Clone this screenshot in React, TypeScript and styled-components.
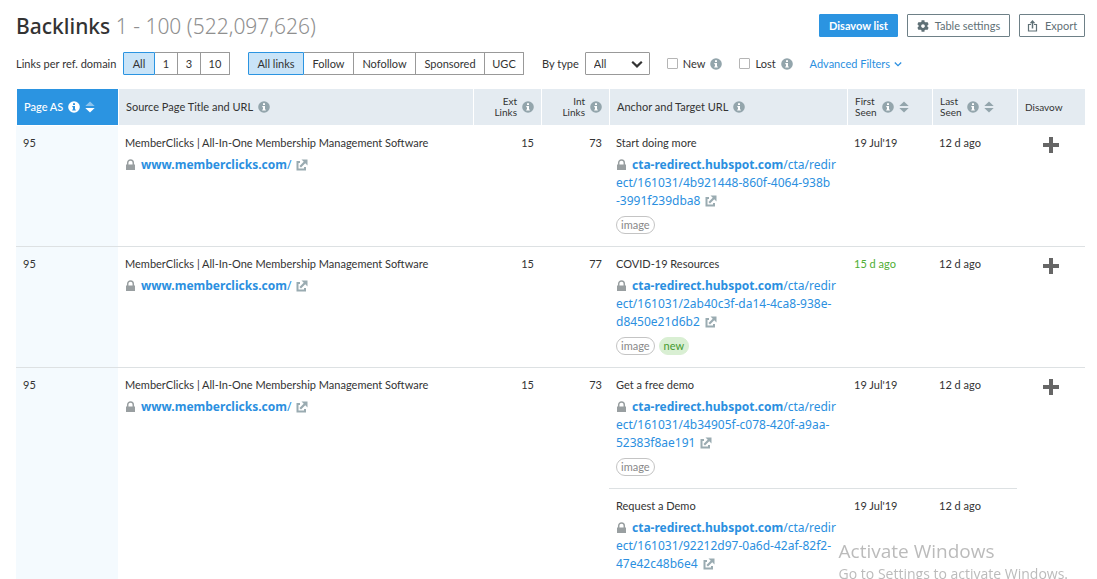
import React from 'react';
import styled, { createGlobalStyle, css } from 'styled-components';
import { FaCog } from 'react-icons/fa';

const GlobalStyle = createGlobalStyle`
  *, *::before, *::after { box-sizing: border-box; }
  html { scrollbar-width: none; }
  body {
    margin: 0;
    background: #fff;
    color: #333;
    font-family: Lato, "Noto Sans", sans-serif;
    font-size: 11px;
    line-height: 18px;
  }
  button, input, select { font: inherit; color: inherit; }
`;

const Page = styled.main`
  padding: 14px 12px 0 16px;
`;

const TitleBar = styled.header`
  display: flex;
  align-items: flex-start;
  justify-content: space-between;
`;

const Title = styled.h1`
  margin: 0;
  font-family: "Noto Sans", sans-serif;
  font-size: 21px;
  line-height: 24px;
  font-weight: 500;
`;

const Count = styled.span`
  font-weight: 300;
  color: #8f8f8f;
`;

const Actions = styled.div`
  display: flex;
  gap: 9px;
`;

const ActionButton = styled.button<{ $primary?: boolean; $width: number }>`
  display: flex;
  align-items: center;
  justify-content: center;
  gap: 6px;
  width: ${(p) => p.$width}px;
  height: 23px;
  padding: 0;
  white-space: nowrap;
  border: 1px solid #6e8087;
  border-radius: 1px;
  background: #fff;
  color: #5f7076;
  ${(p) =>
    p.$primary &&
    css`
      border-color: #2b94e1;
      background: #2b94e1;
      color: #fff;
      font-weight: 700;
    `}
`;

const Filters = styled.div`
  display: flex;
  align-items: center;
  height: 23px;
  margin-top: 14px;
  white-space: nowrap;
`;

const FilterLabel = styled.span`
  width: 107px;
`;

const Segments = styled.div`
  display: flex;
  margin-right: 18px;
`;

const Segment = styled.button<{ $width: number; $active?: boolean }>`
  width: ${(p) => p.$width}px;
  height: 23px;
  padding: 0;
  line-height: 21px;
  border: 1px solid #999;
  border-left-width: 0;
  background: #fff;
  color: #333;
  &:last-child { border-radius: 0 1px 1px 0; }
  ${(p) =>
    p.$active &&
    css`
      border: 1px solid #2b94e1;
      background: #c9e4f8;
      border-radius: 1px 0 0 1px;
    `}
`;

const SelectLabel = styled.label`
  display: flex;
  align-items: center;
  gap: 6px;
  margin-right: 17px;
`;

const SelectBox = styled.span`
  display: grid;
  align-items: center;
  width: 65px;
  > * { grid-area: 1 / 1; }
  > svg { justify-self: end; margin-right: 7px; pointer-events: none; }
`;

const Select = styled.select`
  appearance: none;
  width: 100%;
  height: 23px;
  padding: 0 8px;
  border: 1px solid #999;
  border-radius: 1px;
  background: #fff;
`;

const CheckGroup = styled.div`
  display: flex;
  align-items: center;
  gap: 5px;
  margin-right: 17px;
`;

const CheckLabel = styled.label`
  display: flex;
  align-items: center;
  gap: 5px;
`;

const Checkbox = styled.input`
  appearance: none;
  width: 11px;
  height: 11px;
  margin: 0;
  border: 1px solid #b5b5b5;
  border-radius: 1px;
  background: #fff;
`;

const AdvancedLink = styled.a`
  display: flex;
  align-items: center;
  gap: 4px;
  color: #2b8fe0;
  text-decoration: none;
`;

const Table = styled.table`
  width: 100%;
  margin-top: 14px;
  table-layout: fixed;
  border-collapse: separate;
  border-spacing: 0;
`;

const HeadCell = styled.th<{ $active?: boolean }>`
  height: 37px;
  padding: 0 7px;
  text-align: left;
  font-weight: 400;
  white-space: nowrap;
  background: #e4ebf1;
  border-left: 1px solid #fff;
  border-bottom: 1px solid #fff;
  ${(p) =>
    p.$active &&
    css`
      background: #2b94e1;
      color: #fff;
      font-weight: 500;
    `}
`;

const HeadContent = styled.div<{ $end?: boolean }>`
  display: flex;
  align-items: center;
  justify-content: ${(p) => (p.$end ? 'flex-end' : 'flex-start')};
  gap: 5px;
`;

const Stacked = styled.span<{ $end?: boolean }>`
  font-size: 10px;
  line-height: 11px;
  text-align: ${(p) => (p.$end ? 'right' : 'left')};
`;

const Small = styled.span`
  font-size: 10px;
`;

const Cell = styled.td<{ $tint?: boolean; $num?: boolean; $fresh?: boolean }>`
  height: 121px;
  padding: 8px 7px 11px;
  vertical-align: top;
  white-space: nowrap;
  border-bottom: 1px solid #dde1e3;
  text-align: ${(p) => (p.$num ? 'right' : 'left')};
  color: ${(p) => (p.$fresh ? '#4fae33' : '#333')};
  background: ${(p) => (p.$tint ? '#f4fafe' : 'transparent')};
`;

const PlusCell = styled(Cell)`
  padding: 10px 25px;
`;

const PlusButton = styled.button`
  display: block;
  padding: 0;
  border: 0;
  background: none;
  color: #666;
  line-height: 0;
`;

const UrlBlock = styled.div`
  margin-top: 4px;
  font-family: "Noto Sans", sans-serif;
  font-size: 12px;
  line-height: 18px;
  white-space: pre-line;
  > svg { vertical-align: -2px; }
`;

const Url = styled.a`
  margin: 0 5px;
  color: #2b8fe0;
  text-decoration: none;
`;

const Domain = styled.strong`
  font-weight: 700;
`;

const Tags = styled.div`
  display: flex;
  gap: 4px;
  margin-top: 6px;
`;

const Tag = styled.span<{ $fresh?: boolean }>`
  height: 18px;
  padding: 0 4px;
  line-height: 16px;
  border: 1px solid ${(p) => (p.$fresh ? '#d9efd3' : '#c4c4c4')};
  border-radius: 9px;
  background: ${(p) => (p.$fresh ? '#d9efd3' : '#fff')};
  color: ${(p) => (p.$fresh ? '#459a30' : '#888')};
`;

const Watermark = styled.div`
  position: fixed;
  right: 29px;
  bottom: -5px;
  color: rgba(120, 120, 120, 0.5);
  font-family: "Open Sans", sans-serif;
  font-size: 14px;
  line-height: 20px;
  white-space: nowrap;
  pointer-events: none;
`;

const WatermarkTitle = styled.div`
  font-size: 19px;
  line-height: 26px;
`;

const InfoIcon = ({ light }: { light?: boolean }) => (
  <svg width="12" height="12" viewBox="0 0 12 12" aria-hidden="true">
    <circle cx="6" cy="6" r="5.8" fill={light ? '#fff' : '#93a5ac'} />
    <path
      d="M5 2.3h2v1.7H5zM4.3 5H7v3.4h.8v1.2H4.2V8.400H5V6.200h-.7z"
      fill={light ? '#2b94e1' : '#fff'}
    />
  </svg>
);

const SortIcon = ({ light }: { light?: boolean }) => (
  <svg width="10" height="12" viewBox="0 0 10 12" aria-hidden="true">
    <path d="M5 .5 9.700 5H.3z" fill={light ? '#8cc4ee' : '#93a5ac'} />
    <path d="M5 11.500 9.700 7H.3z" fill={light ? '#fff' : '#93a5ac'} />
  </svg>
);

const LockIcon = () => (
  <svg width="11" height="12" viewBox="0 0 11 12" aria-hidden="true">
    <path d="M2.700 6V3.700a2.800 2.800 0 0 1 5.600 0V6" fill="none" stroke="#999fa1" strokeWidth="1.500" />
    <rect x="1" y="5.500" width="9" height="5.500" fill="#999fa1" />
  </svg>
);

const ExternalIcon = () => (
  <svg width="12" height="12" viewBox="0 0 12 12" aria-hidden="true">
    <path d="M4 3H1.500v7.500H9V8" fill="none" stroke="#9aabb1" strokeWidth="2" />
    <path d="M4.200 7.800 9 3" fill="none" stroke="#9aabb1" strokeWidth="2.200" />
    <path d="M5.500 .5h6v6z" fill="#9aabb1" />
  </svg>
);

const PlusIcon = () => (
  <svg width="18" height="18" viewBox="0 0 18 18" aria-hidden="true">
    <path d="M7 1h4v6h6v4h-6v6H7v-6H1V7h6z" fill="currentColor" />
  </svg>
);

const ExportIcon = () => (
  <svg width="12" height="12" viewBox="0 0 12 12" aria-hidden="true">
    <path d="M4 4.500H1.500v6.500h8V4.500H7" fill="none" stroke="currentColor" strokeWidth="1.200" />
    <path d="M5.500 8.500V2" fill="none" stroke="currentColor" strokeWidth="1.500" />
    <path d="M5.500 0 8.300 3.200H2.700z" fill="currentColor" />
  </svg>
);

const Chevron = ({ size, weight }: { size: number; weight: number }) => (
  <svg width={size} height={size} viewBox="0 0 10 10" aria-hidden="true">
    <path d="M1 3.200 5 7l4-3.800" fill="none" stroke="currentColor" strokeWidth={weight} />
  </svg>
);

type Target = { anchor: string; path: string; first: string; fresh?: boolean };
type Backlink = { internal: number; targets: Target[] };

const backlinks: Backlink[] = [
  {
    internal: 73,
    targets: [
      { anchor: 'Start doing more', path: '/cta/redir\nect/161031/4b921448-860f-4064-938b\n-3991f239dba8', first: "19 Jul'19" },
    ],
  },
  {
    internal: 77,
    targets: [
      { anchor: 'COVID-19 Resources', path: '/cta/redir\nect/161031/2ab40c3f-da14-4ca8-938e-\nd8450e21d6b2', first: '15 d ago', fresh: true },
    ],
  },
  {
    internal: 73,
    targets: [
      { anchor: 'Get a free demo', path: '/cta/redir\nect/161031/4b34905f-c078-420f-a9aa-\n52383f8ae191', first: "19 Jul'19" },
      { anchor: 'Request a Demo', path: '/cta/redir\nect/161031/92212d97-0a6d-42af-82f2-\n47e42c48b6e4', first: "19 Jul'19" },
    ],
  },
];

const perDomain = [
  { label: 'All', width: 32, active: true },
  { label: '1', width: 23 },
  { label: '3', width: 23 },
  { label: '10', width: 29 },
];

const linkKinds = [
  { label: 'All links', width: 56, active: true },
  { label: 'Follow', width: 50 },
  { label: 'Nofollow', width: 62 },
  { label: 'Sponsored', width: 69 },
  { label: 'UGC', width: 39 },
];

const TargetCells = ({ target }: { target: Target }) => (
  <>
    <Cell>
      {target.anchor}
      <UrlBlock>
        <LockIcon />
        <Url href="#target">
          <Domain>cta-redirect.hubspot.com</Domain>
          {target.path}
        </Url>
        <ExternalIcon />
      </UrlBlock>
      <Tags>
        <Tag>image</Tag>
        {target.fresh && <Tag $fresh>new</Tag>}
      </Tags>
    </Cell>
    <Cell $fresh={target.fresh}>{target.first}</Cell>
    <Cell>12 d ago</Cell>
  </>
);

export default function App() {
  return (
    <>
      <GlobalStyle />
      <Page>
        <TitleBar>
          <Title>
            Backlinks <Count>1 - 100 (522,097,626)</Count>
          </Title>
          <Actions>
            <ActionButton $primary $width={79}>Disavow list</ActionButton>
            <ActionButton $width={103}>
              <FaCog size={12} />
              Table settings
            </ActionButton>
            <ActionButton $width={66}>
              <ExportIcon />
              Export
            </ActionButton>
          </Actions>
        </TitleBar>

        <Filters>
          <FilterLabel id="per-domain">Links per ref. domain</FilterLabel>
          <Segments role="group" aria-labelledby="per-domain">
            {perDomain.map((s) => (
              <Segment key={s.label} $width={s.width} $active={s.active}>
                {s.label}
              </Segment>
            ))}
          </Segments>
          <Segments role="group" aria-label="Link kind">
            {linkKinds.map((s) => (
              <Segment key={s.label} $width={s.width} $active={s.active}>
                {s.label}
              </Segment>
            ))}
          </Segments>
          <SelectLabel>
            By type
            <SelectBox>
              <Select defaultValue="All">
                <option>All</option>
              </Select>
              <Chevron size={12} weight={1.8} />
            </SelectBox>
          </SelectLabel>
          <CheckGroup>
            <CheckLabel>
              <Checkbox type="checkbox" />
              New
            </CheckLabel>
            <InfoIcon />
          </CheckGroup>
          <CheckGroup>
            <CheckLabel>
              <Checkbox type="checkbox" />
              Lost
            </CheckLabel>
            <InfoIcon />
          </CheckGroup>
          <AdvancedLink href="#filters">
            Advanced Filters
            <Chevron size={8} weight={1.6} />
          </AdvancedLink>
        </Filters>

        <Table>
          <colgroup>
            <col style={{ width: 102 }} />
            <col />
            <col style={{ width: 68 }} />
            <col style={{ width: 68 }} />
            <col style={{ width: 238 }} />
            <col style={{ width: 85 }} />
            <col style={{ width: 85 }} />
            <col style={{ width: 68 }} />
          </colgroup>
          <thead>
            <tr>
              <HeadCell $active>
                <HeadContent>Page AS<InfoIcon light /><SortIcon light /></HeadContent>
              </HeadCell>
              <HeadCell>
                <HeadContent>Source Page Title and URL<InfoIcon /></HeadContent>
              </HeadCell>
              <HeadCell>
                <HeadContent $end><Stacked $end>Ext<br />Links</Stacked><InfoIcon /></HeadContent>
              </HeadCell>
              <HeadCell>
                <HeadContent $end><Stacked $end>Int<br />Links</Stacked><InfoIcon /></HeadContent>
              </HeadCell>
              <HeadCell>
                <HeadContent>Anchor and Target URL<InfoIcon /></HeadContent>
              </HeadCell>
              <HeadCell>
                <HeadContent><Stacked>First<br />Seen</Stacked><InfoIcon /><SortIcon /></HeadContent>
              </HeadCell>
              <HeadCell>
                <HeadContent><Stacked>Last<br />Seen</Stacked><InfoIcon /><SortIcon /></HeadContent>
              </HeadCell>
              <HeadCell><Small>Disavow</Small></HeadCell>
            </tr>
          </thead>
          <tbody>
            {backlinks.map(({ internal, targets }, i) => {
              const span = targets.length;
              return (
                <React.Fragment key={i}>
                  <tr>
                    <Cell $tint rowSpan={span}>95</Cell>
                    <Cell rowSpan={span}>
                      MemberClicks | All-In-One Membership Management Software
                      <UrlBlock>
                        <LockIcon />
                        <Url href="#source">
                          <Domain>www.memberclicks.com</Domain>/
                        </Url>
                        <ExternalIcon />
                      </UrlBlock>
                    </Cell>
                    <Cell $num rowSpan={span}>15</Cell>
                    <Cell $num rowSpan={span}>{internal}</Cell>
                    <TargetCells target={targets[0]} />
                    <PlusCell rowSpan={span}>
                      <PlusButton aria-label="Add to disavow list"><PlusIcon /></PlusButton>
                    </PlusCell>
                  </tr>
                  {targets.slice(1).map((t) => (
                    <tr key={t.anchor}>
                      <TargetCells target={t} />
                    </tr>
                  ))}
                </React.Fragment>
              );
            })}
          </tbody>
        </Table>
      </Page>
      <Watermark>
        <WatermarkTitle>Activate Windows</WatermarkTitle>
        Go to Settings to activate Windows.
      </Watermark>
    </>
  );
}
